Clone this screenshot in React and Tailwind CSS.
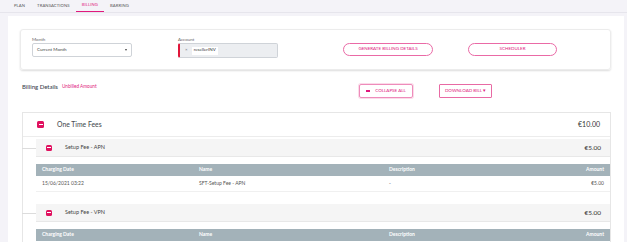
import React from 'react'

const pink = 'text-[#e0197d]'

function MinusBox({ size = 'w-[7px] h-[7px]' }) {
  return (
    <span className={`${size} rounded-[1.5px] bg-[#e0115f] flex items-center justify-center shrink-0`}>
      <span className="w-[4px] h-[1.5px] bg-white" />
    </span>
  )
}

function FeeBlock({ title, amount, rows }) {
  return (
    <div className="relative">
      {/* connector from the outer tree line */}
      <div className="absolute left-[-14px] top-[9px] w-[14px] h-px bg-[#dcdcdc]" />
      <div className="h-[18px] bg-[#f5f5f5] border-b border-[#e8e8e8] flex items-center pl-[10px] pr-[9px]">
        <MinusBox size="w-[6px] h-[6px]" />
        <span className="ml-[13px] text-[5.5px] text-[#444]">{title}</span>
        <span className="ml-auto text-[6.5px] text-[#333]">{amount}</span>
      </div>
      <div className="mt-[7px] h-[12px] bg-[#a3b2b9] grid grid-cols-[157px_190px_1fr_60px] items-center px-[6px] text-[5px] font-bold text-white">
        <span>Charging Date</span>
        <span>Name</span>
        <span>Description</span>
        <span className="text-right">Amount</span>
      </div>
      {rows.map((r, i) => (
        <div
          key={i}
          className="h-[16px] border-b border-[#f0f0f0] grid grid-cols-[157px_190px_1fr_60px] items-center px-[6px] text-[5px] text-[#555]"
        >
          <span>{r[0]}</span>
          <span>{r[1]}</span>
          <span>{r[2]}</span>
          <span className="text-right">{r[3]}</span>
        </div>
      ))}
    </div>
  )
}

export default function App() {
  const tabs = ['PLAN', 'TRANSACTIONS', 'BILLING', 'BARRING']

  return (
    <div className="w-[627px] h-[242px] overflow-hidden bg-[#f4f3f8] font-['Lato','Liberation_Sans',sans-serif]">
      {/* tabs */}
      <div className="h-[13px] border-b border-[#e6e5ec] flex items-stretch pl-[8px]">
        {tabs.map(t => (
          <div
            key={t}
            className={`px-[6px] flex items-center text-[4.2px] tracking-[0.1px] ${
              t === 'BILLING' ? `${pink} border-b border-[#e0197d]` : 'text-[#555]'
            }`}
          >
            {t}
          </div>
        ))}
      </div>

      <div className="ml-[8px] mr-[3px] mt-[3px] h-[230px] bg-white pl-[12px] pr-[13px] pt-[13px]">
        {/* filter card */}
        <div className="h-[41px] rounded-[3px] border border-[#ececec] shadow-[0_1px_2px_rgba(0,0,0,0.14)] flex items-start pt-[6px] pl-[11px]">
          <div className="w-[146px]">
            <div className="text-[4.5px] text-[#666] h-[7px] leading-[7px]">Month</div>
            <div className="w-[100px] h-[14px] rounded-[2px] border border-[#cfd3d8] flex items-center px-[4px] text-[4.5px] text-[#444]">
              Current Month
              <span className="ml-auto w-0 h-0 border-l-[1.5px] border-r-[1.5px] border-t-[2px] border-l-transparent border-r-transparent border-t-[#444]" />
            </div>
          </div>
          <div className="w-[165px]">
            <div className="text-[4.5px] text-[#666] h-[7px] leading-[7px]">Account</div>
            <div className="w-[100px] h-[15px] rounded-[2px] border border-[#cfd3d8] border-l-2 border-l-[#e0163a] bg-[#eceef1] flex items-center pl-[5px]">
              <span className="text-[4.5px] text-[#777]">×</span>
              <span className="ml-[4px] bg-white px-[2px] h-[8px] flex items-center text-[4.5px] text-[#333]">resellerINV</span>
            </div>
          </div>
          <div className="flex gap-[35px] mt-[7px]">
            <div className={`w-[90px] h-[13px] rounded-full border border-[#ea6aa6] flex items-center justify-center text-[4.5px] ${pink}`}>
              GENERATE BILLING DETAILS
            </div>
            <div className={`w-[89px] h-[13px] rounded-full border border-[#ea6aa6] flex items-center justify-center text-[4.5px] ${pink}`}>
              SCHEDULER
            </div>
          </div>
        </div>

        {/* billing details header row */}
        <div className="flex items-start mt-[13px] pl-[2px]">
          <div className="w-[337px] flex items-center -mt-[1px]">
            <span className="text-[6px] font-medium text-[#3c4650]">Billing Details</span>
            <span className={`ml-[4px] text-[4.7px] ${pink}`}>Unbilled Amount</span>
          </div>
          <div className="flex gap-[26px] mt-[1px]">
            <div className={`w-[54px] h-[14px] rounded-[2px] border border-[#ee8cbb] shadow-[0_0_0_1px_#fbdbe9] flex items-center justify-center text-[4.5px] ${pink}`}>
              <span className="w-[4px] h-[1.5px] bg-[#e0197d] mr-[5px]" />
              COLLAPSE ALL
            </div>
            <div className={`w-[53px] h-[14px] rounded-[1px] border border-[#e86aa4] flex items-center justify-center text-[4.5px] ${pink}`}>
              DOWNLOAD BILL ▾
            </div>
          </div>
        </div>

        {/* accordion */}
        <div className="mt-[14px] ml-[2px] border border-[#e6e6e6] border-b-0 h-[130px]">
          <div className="h-[24px] border-b border-[#ececec] flex items-center pl-[14px] pr-[10px]">
            <MinusBox />
            <span className="ml-[13px] text-[6.8px] font-medium text-[#4a4f55]">One Time Fees</span>
            <span className="ml-auto text-[7px] text-[#333]">€10.00</span>
          </div>
          <div className="pl-[13px] pt-[2px]">
            <FeeBlock
              title="Setup Fee - APN"
              amount="€5.00"
              rows={[['15/06/2021 03:22', 'SFT-Setup Fee - APN', '-', '€5.00']]}
            />
            <div className="mt-[12px]">
              <FeeBlock title="Setup Fee - VPN" amount="€5.00" rows={[]} />
            </div>
          </div>
        </div>
      </div>
    </div>
  )
}
